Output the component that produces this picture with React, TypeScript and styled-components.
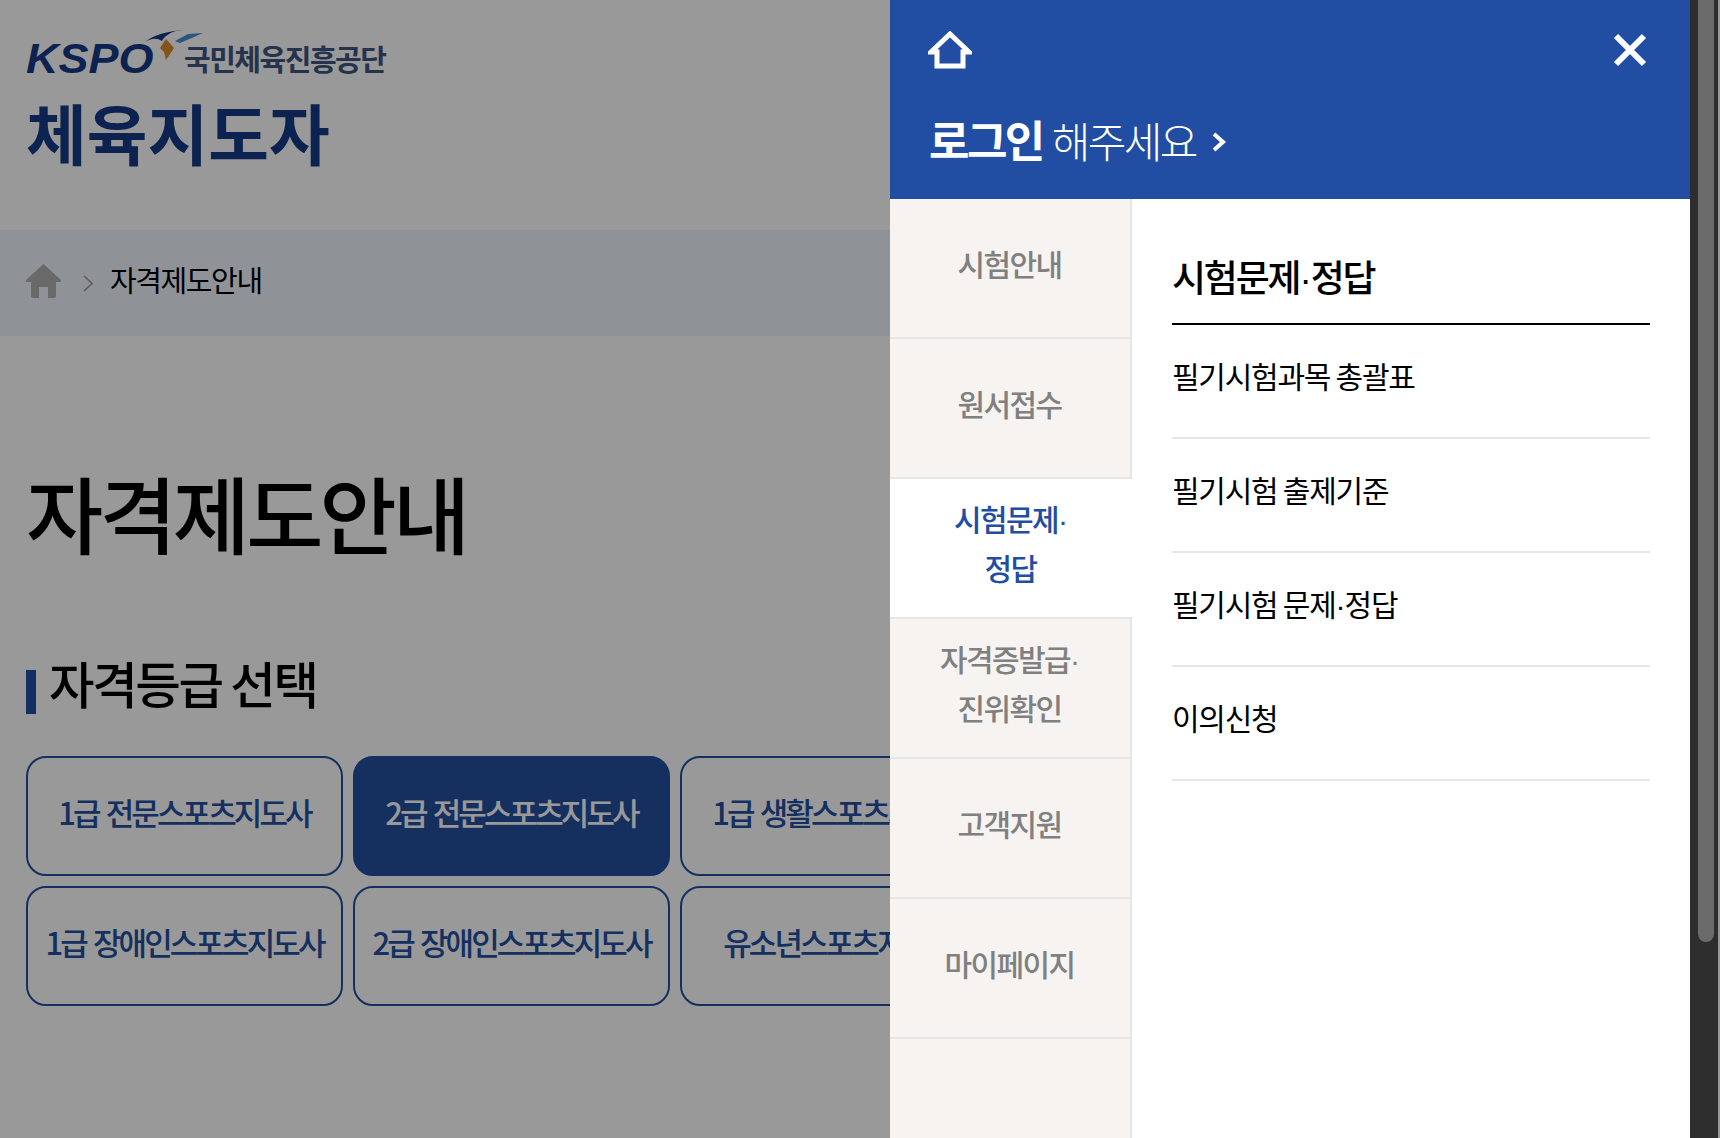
import React from "react";
import styled, { createGlobalStyle } from "styled-components";

const GlobalStyle = createGlobalStyle`
  html, body {
    margin: 0;
    padding: 0;
    background: #fff;
  }
  body {
    font-family: "Noto Sans CJK KR", "Noto Sans", sans-serif;
  }
  * {
    box-sizing: border-box;
  }
`;

const Shell = styled.div`
  position: relative;
  width: 1720px;
  height: 1138px;
  overflow: hidden;
  background: #fff;
`;
const Page = styled.div`
  display: flex;
  flex-direction: column;
  width: 1200px;
`;
const SiteHeader = styled.header`
  height: 230px;
  padding: 26px 26px 0;
`;
const LogoRow = styled.div`
  display: flex;
  align-items: flex-end;
  height: 50px;
`;
const LogoMark = styled.div`
  position: relative;
  flex: none;
  width: 158px;
  height: 50px;
  svg {
    position: absolute;
    left: 116px;
    top: 2px;
  }
`;
const LogoLetters = styled.span`
  position: absolute;
  left: 0;
  bottom: -4px;
  font-family: "Liberation Sans", sans-serif;
  font-weight: 700;
  font-style: italic;
  font-size: 42px;
  line-height: 42px;
  color: #153a85;
  display: inline-block;
  transform: scaleX(1.07);
  transform-origin: left bottom;
`;
const LogoName = styled.span`
  font-size: 29px;
  line-height: 36px;
  font-weight: 700;
  letter-spacing: -1.5px;
  color: #40557f;
`;
const SiteTitle = styled.div`
  font-size: 66px;
  line-height: 80px;
  font-weight: 700;
  letter-spacing: 0;
  color: #153a85;
  margin-top: 15px;
`;
const Breadcrumb = styled.nav`
  display: flex;
  align-items: center;
  height: 106px;
  padding: 0 0 4px 26px;
  background: #eef5fc;
`;
const CrumbSep = styled.span`
  display: flex;
  margin: 4px 17px 0 22px;
`;
const CrumbText = styled.span`
  margin-bottom: 4px;
  font-size: 29px;
  letter-spacing: -1.4px;
  color: #000;
`;
const PageTitle = styled.h1`
  margin: 116px 0 0 26px;
  font-size: 84px;
  line-height: 120px;
  font-weight: 500;
  letter-spacing: -3.9px;
  color: #000;
`;
const SectionTitle = styled.h2`
  display: flex;
  align-items: flex-end;
  margin: 81px 0 0 26px;
  font-size: 49.5px;
  line-height: 60px;
  font-weight: 500;
  letter-spacing: -2.4px;
  color: #000;
  &::before {
    content: "";
    width: 10px;
    height: 44px;
    margin-right: 13px;
    margin-bottom: -1px;
    background: #214ea3;
  }
`;
const GradeGrid = styled.div`
  display: grid;
  grid-template-columns: repeat(3, 317px);
  grid-auto-rows: 120px;
  gap: 10px;
  margin: 43px 0 0 26px;
`;
const GradeButton = styled.button<{ $active?: boolean }>`
  padding: 0 0 10px;
  border: 2px solid #24509f;
  border-radius: 20px;
  background: ${(p) => (p.$active ? "#24509f" : "#fff")};
  color: ${(p) => (p.$active ? "#fff" : "#24509f")};
  font-family: inherit;
  font-size: 31px;
  font-weight: 500;
  letter-spacing: -2.9px;
  word-spacing: 3px;
  white-space: nowrap;
`;
const Dim = styled.div`
  position: absolute;
  inset: 0;
  background: rgba(0, 0, 0, 0.4);
`;
const Drawer = styled.aside`
  position: absolute;
  top: 0;
  bottom: 0;
  left: 890px;
  width: 800px;
  display: flex;
  flex-direction: column;
  background: #fff;
`;
const DrawerHead = styled.div`
  flex: none;
  height: 199px;
  padding: 30px 43px 0 38px;
  background: #214ea3;
  color: #fff;
`;
const HeadIcons = styled.div`
  display: flex;
  justify-content: space-between;
  align-items: center;
  height: 40px;
`;
const LoginLine = styled.div`
  display: flex;
  align-items: center;
  margin-top: 39px;
  padding-left: 1px;
  height: 60px;
  font-size: 42px;
  letter-spacing: -2.6px;
  font-weight: 300;
  b {
    font-size: 44px;
    font-weight: 700;
    margin-right: 9px;
  }
  svg {
    margin-left: 16px;
    margin-top: 5px;
  }
`;
const DrawerBody = styled.div`
  flex: 1;
  display: flex;
  min-height: 0;
`;
const Tabs = styled.ul`
  flex: none;
  width: 242px;
  margin: 0;
  padding: 0;
  list-style: none;
  background: #f6f3f1;
  border-right: 2px solid #e6e6e6;
`;
const Tab = styled.li<{ $active?: boolean }>`
  display: flex;
  align-items: center;
  justify-content: center;
  height: 140px;
  padding: 0 37px 10px 36px;
  text-align: center;
  font-size: 30px;
  font-weight: 500;
  line-height: 47px;
  letter-spacing: -1.6px;
  border-bottom: 2px solid #e6e6e6;
  background: ${(p) => (p.$active ? "#fff" : "transparent")};
  color: ${(p) => (p.$active ? "#214ea3" : "#808080")};
  margin-right: ${(p) => (p.$active ? "-2px" : "0")};
  position: relative;
`;
const Dot = styled.span`
  font-family: "Liberation Sans", sans-serif;
  letter-spacing: -1px;
`;
const SubPanel = styled.div`
  flex: 1;
  padding: 44px 40px 0 40px;
`;
const SubTitle = styled.h3`
  margin: 0;
  height: 82px;
  padding-top: 5px;
  font-size: 37px;
  line-height: 56px;
  font-weight: 500;
  letter-spacing: -2.2px;
  color: #000;
  border-bottom: 2px solid #000;
`;
const SubList = styled.ul`
  margin: 0;
  padding: 0;
  list-style: none;
`;
const SubItem = styled.li`
  height: 114px;
  padding-top: 30px;
  font-size: 30px;
  line-height: 40px;
  letter-spacing: -1.25px;
  color: #000;
  border-bottom: 2px solid #e6e6e6;
`;
const ScrollRail = styled.div`
  position: absolute;
  top: 0;
  bottom: 0;
  left: 1690px;
  width: 28px;
  padding: 0 4px 0 8px;
  background: #2e2e2e;
`;
const ScrollThumb = styled.div`
  height: 942px;
  border-radius: 0 0 8px 8px;
  background: #6b6b6b;
`;

const tabs = [
  ["시험안내"],
  ["원서접수"],
  ["시험문제·", "정답"],
  ["자격증발급·", "진위확인"],
  ["고객지원"],
  ["마이페이지"],
];
const subItems = [
  "필기시험과목 총괄표",
  "필기시험 출제기준",
  "필기시험 문제·정답",
  "이의신청",
];
const grades = [
  "1급 전문스포츠지도사",
  "2급 전문스포츠지도사",
  "1급 생활스포츠지도사",
  "1급 장애인스포츠지도사",
  "2급 장애인스포츠지도사",
  "유소년스포츠지도사",
];

// the site's font has a narrow middle dot, the CJK one does not
const withDot = (text: string) => {
  const parts = text.split("·");
  if (parts.length === 1) return text;
  return (
    <>
      {parts[0]}
      <Dot>·</Dot>
      {parts[1]}
    </>
  );
};

const App = () => {
  return (
    <Shell>
      <GlobalStyle />
      <Page>
        <SiteHeader>
          <LogoRow>
            <LogoMark>
              <LogoLetters>KSPO</LogoLetters>
              <svg width="64" height="34" viewBox="0 0 64 34">
                <path d="M3 14 C12 7 24 3 44 2 L34 3 C27 5 22 9 20 13 C14 9 8 11 3 14 Z" fill="#153a85" />
                <path d="M33 13 L46 6 L61 5 L52 9 L38 15 Z" fill="#4a8fd0" />
                <path d="M24 11 L32 20 L24 32 L22 24 L18 20 Z" fill="#e08a2a" />
              </svg>
            </LogoMark>
            <LogoName>국민체육진흥공단</LogoName>
          </LogoRow>
          <SiteTitle>체육지도자</SiteTitle>
        </SiteHeader>
        <Breadcrumb>
          <svg width="35" height="34" viewBox="0 0 35 34">
            <path d="M17.5 0 L35 16 L35 18 L30 18 L30 32 Q30 34 28 34 L22 34 L22 23 L13 23 L13 34 L7 34 Q5 34 5 32 L5 18 L0 18 L0 16 Z" fill="#b0b0b0" />
          </svg>
          <CrumbSep>
            <svg width="10" height="17" viewBox="0 0 10 17">
              <path d="M1 1 L9 8.5 L1 16" fill="none" stroke="#999" strokeWidth="1.6" />
            </svg>
          </CrumbSep>
          <CrumbText>자격제도안내</CrumbText>
        </Breadcrumb>
        <PageTitle>자격제도안내</PageTitle>
        <SectionTitle>자격등급 선택</SectionTitle>
        <GradeGrid>
          {grades.map((g, i) => (
            <GradeButton key={g} $active={i === 1}>
              {g}
            </GradeButton>
          ))}
        </GradeGrid>
      </Page>
      <Dim />
      <Drawer>
        <DrawerHead>
          <HeadIcons>
            <svg width="44" height="38" viewBox="0 0 44 38">
              <path d="M22 3 L41 21 L35 21 L35 35 L9 35 L9 21 L3 21 Z" fill="none" stroke="#fff" strokeWidth="5" strokeLinejoin="miter" />
            </svg>
            <svg width="34" height="34" viewBox="0 0 34 34">
              <path d="M3 3 L31 31 M31 3 L3 31" fill="none" stroke="#fff" strokeWidth="6" />
            </svg>
          </HeadIcons>
          <LoginLine>
            <b>로그인</b> 해주세요
            <svg width="14" height="20" viewBox="0 0 14 20">
              <path d="M2 2 L11 10 L2 18" fill="none" stroke="#fff" strokeWidth="4" />
            </svg>
          </LoginLine>
        </DrawerHead>
        <DrawerBody>
          <Tabs>
            {tabs.map((lines, i) => (
              <Tab key={lines[0]} $active={i === 2}>
                <span>
                  {lines.map((l) => (
                    <div key={l}>{withDot(l)}</div>
                  ))}
                </span>
              </Tab>
            ))}
          </Tabs>
          <SubPanel>
            <SubTitle>{withDot("시험문제·정답")}</SubTitle>
            <SubList>
              {subItems.map((s) => (
                <SubItem key={s}>{withDot(s)}</SubItem>
              ))}
            </SubList>
          </SubPanel>
        </DrawerBody>
      </Drawer>
      <ScrollRail>
        <ScrollThumb />
      </ScrollRail>
    </Shell>
  );
};

export default App;
